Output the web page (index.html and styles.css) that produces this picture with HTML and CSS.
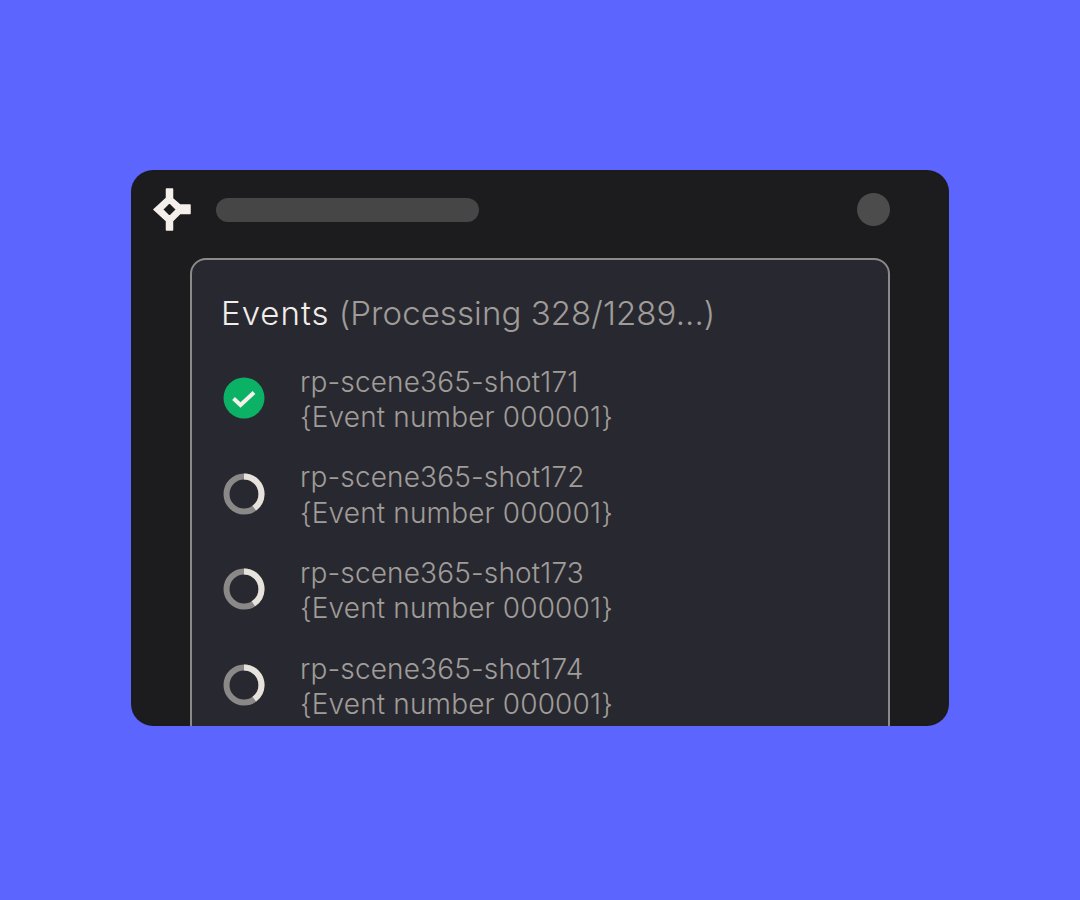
FILE: index.html
```html
<!DOCTYPE html>
<html lang="en">
<head>
    <meta charset="UTF-8">
    <meta name="viewport" content="width=device-width, initial-scale=1.0">
    <title>Events</title>
    <link rel="stylesheet" href="styles.css">
</head>
<body>
<div class="window">
    <div class="topbar">
        <svg class="logo" viewBox="0 0 38 43" width="38" height="43">
            <path fill="#f4efea" stroke="#f4efea" stroke-width="1.5" stroke-linejoin="round" fill-rule="evenodd" d="M13.5 1H19.5V10.5L27 17H37V25.5H27L19.5 33V42H13.5V33L1 21.5L13.5 10ZM16.5 14.5L9.5 21.5L16.5 28.5L23.5 21.5Z"/>
        </svg>
        <div class="search-bar"></div>
        <div class="avatar"></div>
    </div>
    <div class="panel">
        <h1 class="title"><span class="title-name">Events</span> <span class="title-status">(Processing 328/1289...)</span></h1>
        <div class="event">
            <svg class="status" viewBox="0 0 42 42" width="42" height="42">
                <circle cx="21" cy="21" r="20.5" fill="#0bb265"/>
                <path d="M10.5 21.5L17.5 28L31 15.5" fill="none" stroke="#f4efea" stroke-width="4"/>
            </svg>
            <div class="event-text">rp-scene365-shot171<br>{Event number 000001}</div>
        </div>
        <div class="event">
            <svg class="status" viewBox="0 0 42 42" width="42" height="42">
                <circle class="ring" cx="21" cy="21" r="17.5"/>
                <circle class="ring-progress" cx="21" cy="21" r="17.5" pathLength="100" stroke-dasharray="40 100"/>
            </svg>
            <div class="event-text">rp-scene365-shot172<br>{Event number 000001}</div>
        </div>
        <div class="event">
            <svg class="status" viewBox="0 0 42 42" width="42" height="42">
                <circle class="ring" cx="21" cy="21" r="17.5"/>
                <circle class="ring-progress" cx="21" cy="21" r="17.5" pathLength="100" stroke-dasharray="41 100"/>
            </svg>
            <div class="event-text">rp-scene365-shot173<br>{Event number 000001}</div>
        </div>
        <div class="event">
            <svg class="status" viewBox="0 0 42 42" width="42" height="42">
                <circle class="ring" cx="21" cy="21" r="17.5"/>
                <circle class="ring-progress" cx="21" cy="21" r="17.5" pathLength="100" stroke-dasharray="40 100"/>
            </svg>
            <div class="event-text">rp-scene365-shot174<br>{Event number 000001}</div>
        </div>
    </div>
</div>
</body>
</html>
```

FILE: styles.css
```css
body {
    margin: 0;
    height: 900px;
    overflow: hidden;
    background-color: #5c66ff;
    font-family: Inter, "Liberation Sans", sans-serif;
}
.window {
    width: 818px;
    height: 556px;
    margin: 170px 0 0 131px;
    background-color: #1c1c1e;
    border-radius: 22px;
    overflow: hidden;
}
.topbar {
    display: flex;
    align-items: center;
    height: 78px;
    padding: 0 59px 0 22px;
}
.logo {
    flex: none;
}
.search-bar {
    width: 263px;
    height: 24px;
    margin: 1px 0 0 25px;
    background-color: #464646;
    border-radius: 12px;
}
.avatar {
    width: 33px;
    height: 33px;
    margin-left: auto;
    background-color: #4c4c4c;
    border-radius: 50%;
}
.panel {
    width: 700px;
    height: 520px;
    box-sizing: border-box;
    margin: 10px 0 0 59px;
    padding: 33px 29px 0;
    background-color: #282930;
    border: 2px solid #8c8a88;
    border-radius: 16px;
}
.title {
    margin: 0 0 30px;
    font-size: 33px;
    font-weight: 300;
    line-height: 40px;
    color: #f2ede8;
}
.title-name {
    letter-spacing: 1px;
}
.title-status {
    letter-spacing: 0.08px;
    color: #a09c98;
}
.event {
    display: flex;
    align-items: center;
    gap: 35px;
    height: 70px;
    margin-bottom: 25.7px;
}
.status {
    flex: none;
    margin-left: 2px;
}
.ring, .ring-progress {
    fill: none;
    stroke-width: 6;
}
.ring {
    stroke: #8a8987;
}
.ring-progress {
    stroke: #e8e2dc;
    transform: rotate(-90deg);
    transform-origin: center;
}
.event-text {
    padding-top: 4px;
    font-size: 28px;
    font-weight: 300;
    line-height: 35.5px;
    letter-spacing: 0.15px;
    color: #a09c98;
}
```
